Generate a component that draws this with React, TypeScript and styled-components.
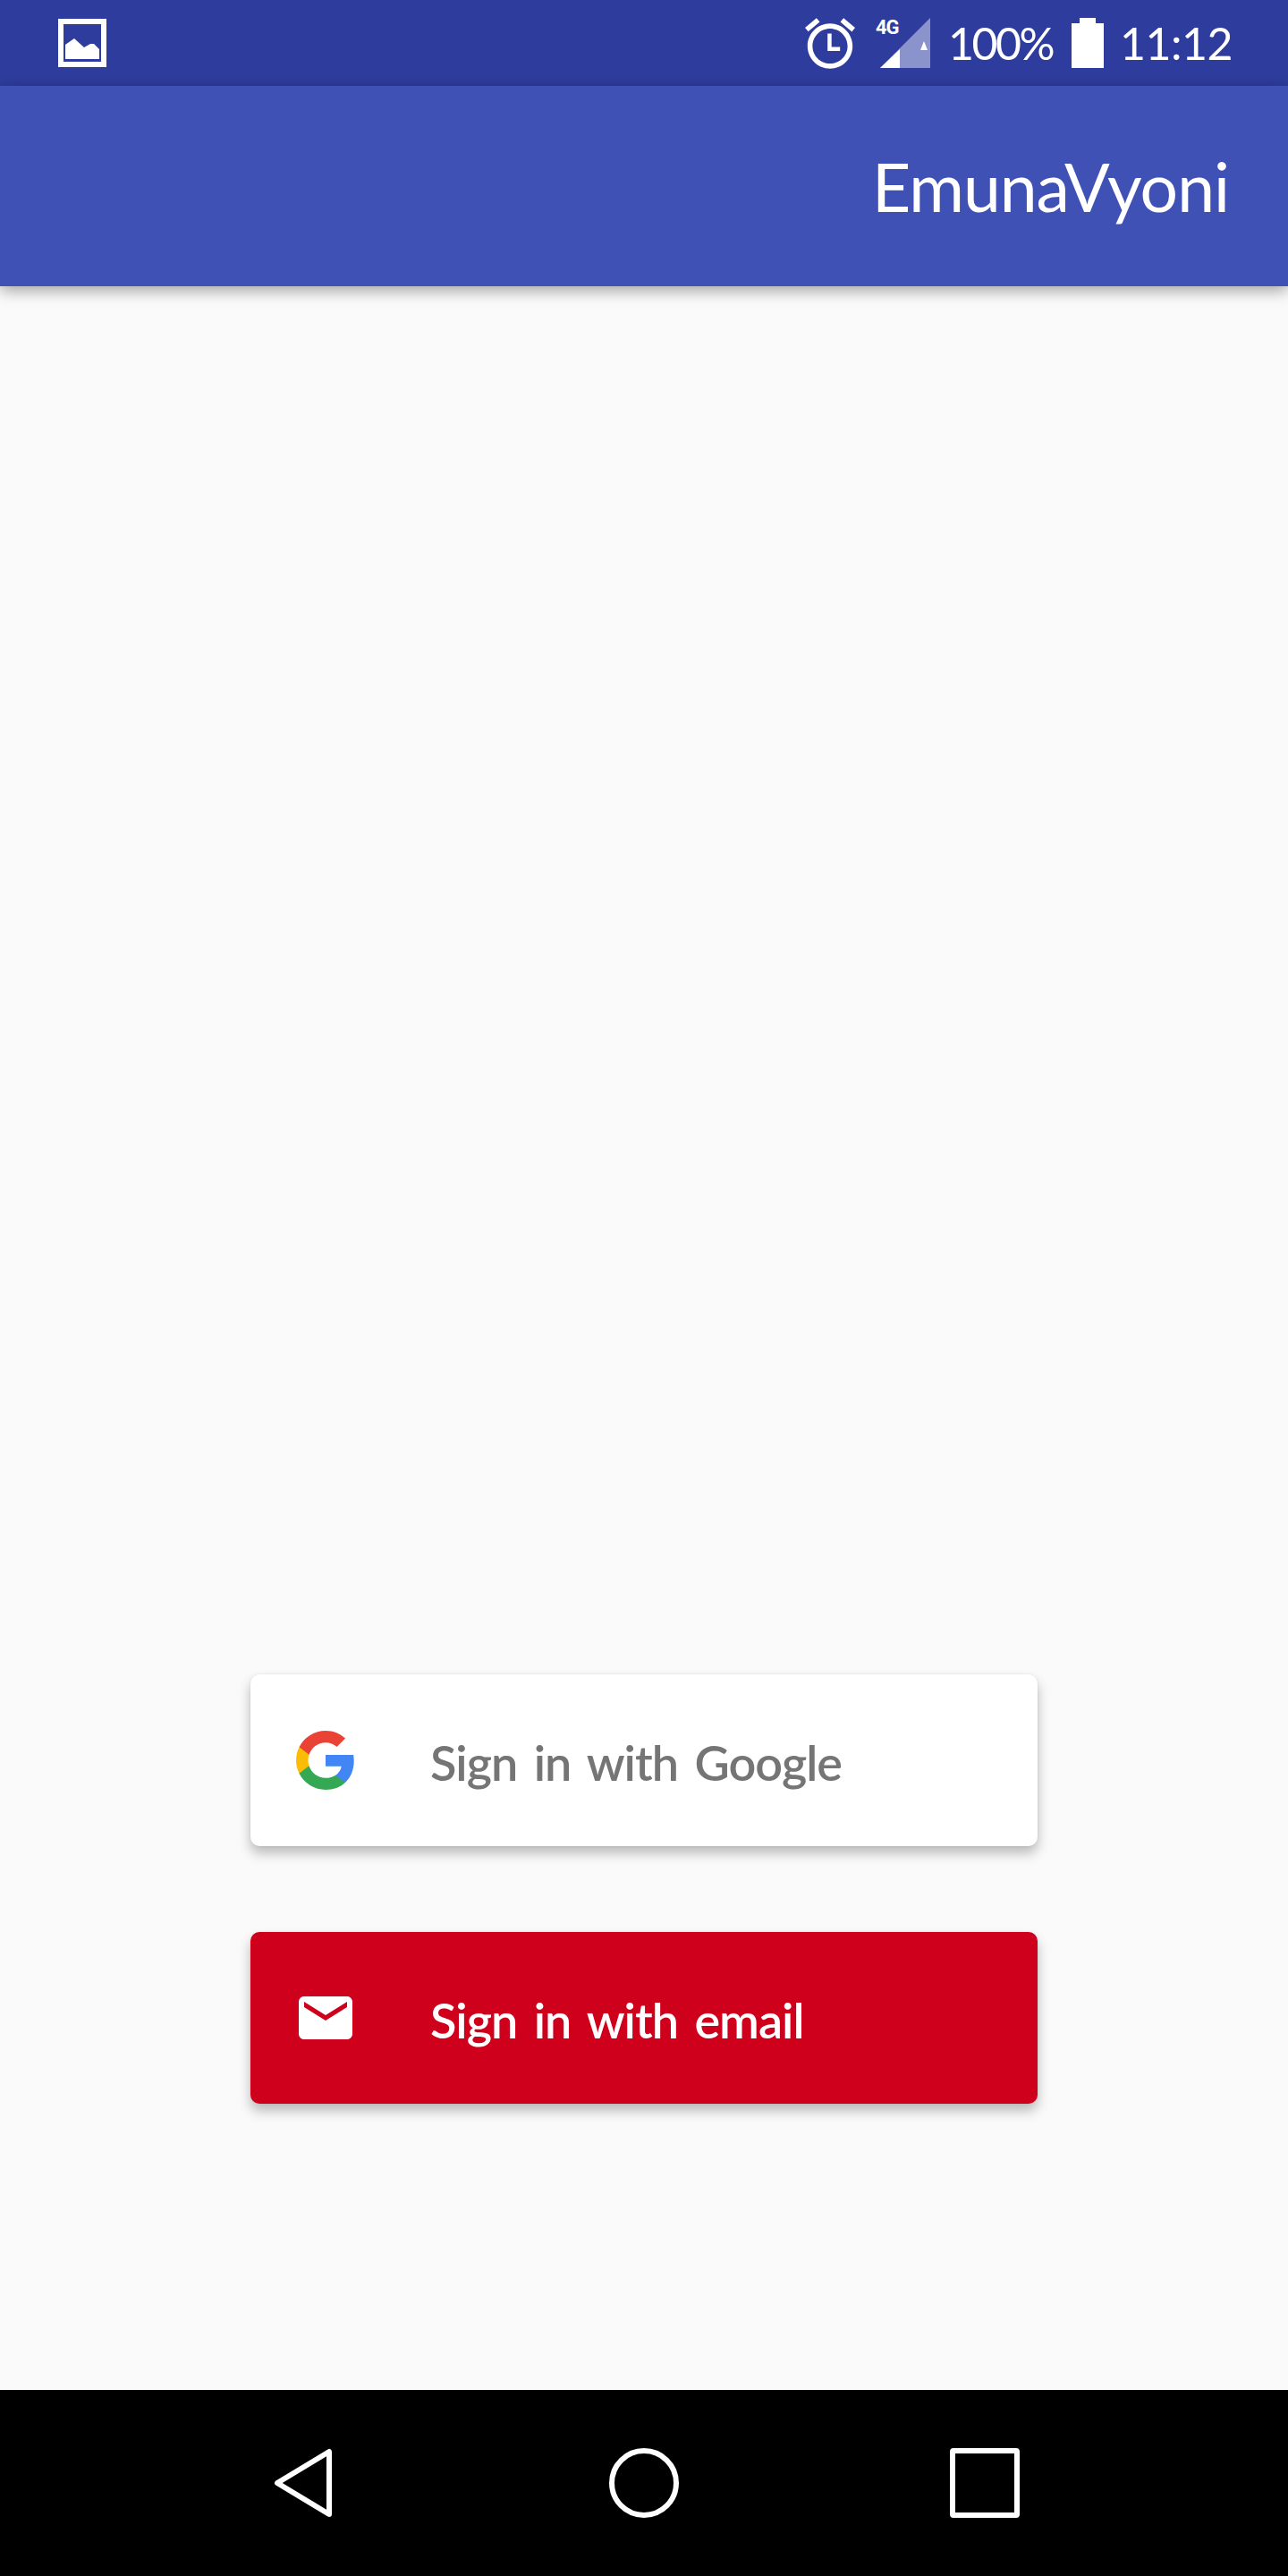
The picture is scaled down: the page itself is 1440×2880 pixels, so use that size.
import React from "react";
import styled, { createGlobalStyle } from "styled-components";

const Global = createGlobalStyle`
  html, body { margin: 0; padding: 0; background: #fafafa; }
  * { box-sizing: border-box; }
`;

const Screen = styled.div`
  width: 1440px;
  height: 2880px;
  display: flex;
  flex-direction: column;
  background: #fafafa;
  font-family: Lato, "Liberation Sans", sans-serif;
  overflow: hidden;
`;

const StatusBar = styled.div`
  height: 96px;
  flex: none;
  background: #2e3c9d;
  display: flex;
  align-items: center;
  justify-content: space-between;
  padding: 0 64px 0 65px;
  color: #fff;
`;

const StatusGroup = styled.div`
  display: flex;
  align-items: center;
`;

const StatusText = styled.span<{ $left: number; $spacing: number; $width: number }>`
  width: ${(p) => p.$width}px;
  margin-left: ${(p) => p.$left}px;
  font-size: 50px;
  line-height: 96px;
  font-weight: 400;
  letter-spacing: ${(p) => p.$spacing}px;
  white-space: nowrap;
`;

const SignalWrap = styled.div`
  position: relative;
  width: 56px;
  height: 56px;
  margin-left: 28px;
`;

const NetworkLabel = styled.span`
  position: absolute;
  left: -5px;
  top: 0;
  font-family: Roboto, sans-serif;
  font-size: 22px;
  line-height: 22px;
  font-weight: 700;
  letter-spacing: -1px;
`;

const AppBar = styled.header`
  position: relative;
  z-index: 1;
  height: 224px;
  flex: none;
  background: #3f51b5;
  box-shadow: 0 5px 16px rgba(0, 0, 0, 0.35);
  display: flex;
  align-items: center;
  justify-content: flex-end;
  padding: 0 66px 0 0;
`;

const Title = styled.h1`
  margin: 0;
  color: #fff;
  font-size: 75px;
  font-weight: 400;
  line-height: 1;
  letter-spacing: -1px;
`;

const Main = styled.main`
  flex: 1;
  display: flex;
  flex-direction: column;
  align-items: center;
  justify-content: flex-end;
  gap: 96px;
  padding-bottom: 320px;
`;

const SignInButton = styled.button<{ $bg: string; $fg: string }>`
  width: 880px;
  height: 192px;
  border: 0;
  border-radius: 10px;
  background: ${(p) => p.$bg};
  color: ${(p) => p.$fg};
  box-shadow: 0 8px 14px rgba(0, 0, 0, 0.26), 0 0 3px rgba(0, 0, 0, 0.08);
  display: flex;
  align-items: center;
  padding: 0 0 0 48px;
  font-family: inherit;
`;

const IconSlot = styled.span`
  width: 72px;
  height: 72px;
  flex: none;
  display: flex;
  align-items: center;
  justify-content: center;
`;

const Label = styled.span`
  margin-left: 81px;
  padding-top: 6px;
  font-size: 54px;
  font-weight: 600;
  line-height: 1;
  letter-spacing: -1px;
  word-spacing: 6px;
  white-space: nowrap;
`;

const NavBar = styled.nav`
  height: 208px;
  flex: none;
  background: #000;
  display: flex;
  align-items: center;
  padding: 0 300px 0 306px;
  justify-content: space-between;
`;

const BatteryGlyph = styled.svg`
  margin-left: 20px;
`;

const GoogleG = () => (
  <svg width="66" height="66" viewBox="0 0 18 18" preserveAspectRatio="none">
    <path fill="#4285F4" d="M17.64 9.2c0-.64-.06-1.25-.16-1.84H9v3.48h4.84a4.14 4.14 0 0 1-1.8 2.72v2.26h2.92c1.7-1.57 2.68-3.88 2.68-6.62z" />
    <path fill="#34A853" d="M9 18c2.43 0 4.47-.8 5.96-2.18l-2.92-2.26c-.8.54-1.84.86-3.04.86-2.34 0-4.33-1.58-5.04-3.71H.96v2.33A9 9 0 0 0 9 18z" />
    <path fill="#FBBC05" d="M3.96 10.71A5.41 5.41 0 0 1 3.68 9c0-.59.1-1.17.28-1.71V4.96H.96A9 9 0 0 0 0 9c0 1.45.35 2.83.96 4.04l3-2.33z" />
    <path fill="#EA4335" d="M9 3.58c1.32 0 2.5.45 3.44 1.35l2.58-2.59C13.46.89 11.43 0 9 0A9 9 0 0 0 .96 4.96l3 2.33C4.67 5.16 6.66 3.58 9 3.58z" />
  </svg>
);

const MailIcon = () => (
  <svg width="72" height="72" viewBox="0 0 24 24" fill="#fff">
    <path d="M20 4H4c-1.1 0-2 .9-2 2v12c0 1.1.9 2 2 2h16c1.1 0 2-.9 2-2V6c0-1.1-.9-2-2-2zm0 4l-8 5-8-5V6l8 5 8-5v2z" />
  </svg>
);

const PictureIcon = () => (
  <svg width="54" height="54" viewBox="0 0 54 54">
    <rect x="3" y="3" width="48" height="48" fill="none" stroke="#fff" strokeWidth="6" />
    <path fill="#fff" d="M8 29l10-7 11 10 7-4 4 0 6 6v11H8z" />
  </svg>
);

const AlarmIcon = () => (
  <svg width="56" height="57" viewBox="2 1.86 20 20.14" fill="#fff">
    <path d="M22 5.72l-4.6-3.86-1.29 1.53 4.6 3.86L22 5.72zM7.88 3.39L6.6 1.86 2 5.71l1.29 1.53 4.59-3.85zM12 4c-4.97 0-9 4.03-9 9s4.03 9 9 9 9-4.03 9-9-4.03-9-9-9zm0 16c-3.87 0-7-3.13-7-7s3.13-7 7-7 7 3.13 7 7-3.13 7-7 7z" />
    <path d="M11 8h1.6v5.4H16V15h-5z" />
  </svg>
);

const SignalIcon = () => (
  <svg width="56" height="56" viewBox="0 0 56 56">
    <path fill="#8b93cc" d="M56 0v56H0z" />
    <path fill="#fff" d="M22 35v21H0z" />
    <path fill="#fff" d="M49 26l4 10h-8z" />
  </svg>
);

const BatteryIcon = () => (
  <BatteryGlyph width="36" height="56" viewBox="0 0 36 56" fill="#fff">
    <path d="M9 0h18v6h9v50H0V6h9z" />
  </BatteryGlyph>
);

const BackIcon = () => (
  <svg width="72" height="78" viewBox="0 0 72 78">
    <path d="M62 4v70L4 39z" fill="none" stroke="#fff" strokeWidth="6" strokeLinejoin="round" />
  </svg>
);

const HomeIcon = () => (
  <svg width="78" height="78" viewBox="0 0 78 78">
    <circle cx="39" cy="39" r="36" fill="none" stroke="#fff" strokeWidth="6" />
  </svg>
);

const RecentsIcon = () => (
  <svg width="78" height="78" viewBox="0 0 78 78">
    <rect x="3" y="3" width="72" height="72" rx="1" fill="none" stroke="#fff" strokeWidth="6" />
  </svg>
);

export default function App() {
  return (
    <Screen>
      <Global />
      <StatusBar>
        <PictureIcon />
        <StatusGroup>
          <AlarmIcon />
          <SignalWrap>
            <SignalIcon />
            <NetworkLabel>4G</NetworkLabel>
          </SignalWrap>
          <StatusText $left={20} $spacing={-2.5} $width={118}>100%</StatusText>
          <BatteryIcon />
          <StatusText $left={18} $spacing={-0.5} $width={124}>11:12</StatusText>
        </StatusGroup>
      </StatusBar>
      <AppBar>
        <Title>EmunaVyoni</Title>
      </AppBar>
      <Main>
        <SignInButton $bg="#ffffff" $fg="#757575">
          <IconSlot>
            <GoogleG />
          </IconSlot>
          <Label>Sign in with Google</Label>
        </SignInButton>
        <SignInButton $bg="#cf001b" $fg="#ffffff">
          <IconSlot>
            <MailIcon />
          </IconSlot>
          <Label>Sign in with email</Label>
        </SignInButton>
      </Main>
      <NavBar>
        <BackIcon />
        <HomeIcon />
        <RecentsIcon />
      </NavBar>
    </Screen>
  );
}
